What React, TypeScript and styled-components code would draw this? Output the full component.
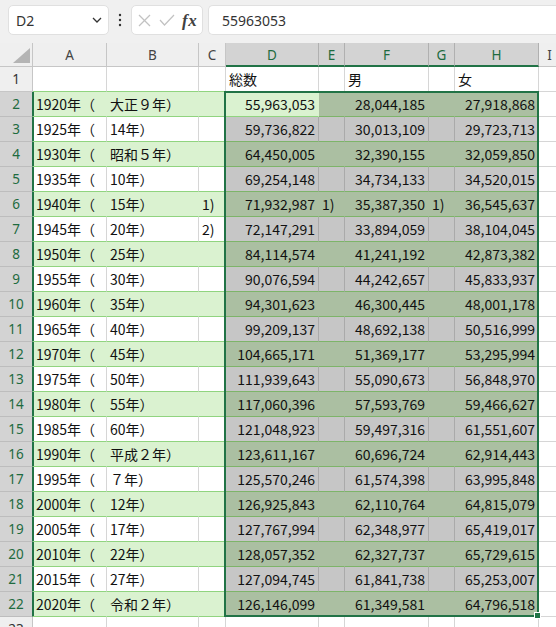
import React from "react";
import styled, { createGlobalStyle } from "styled-components";

const GlobalStyle = createGlobalStyle`
  html, body {
    margin: 0;
    padding: 0;
    width: 556px;
    height: 627px;
    overflow: hidden;
    background: #ffffff;
  }
  #root { width: 556px; height: 627px; overflow: hidden; }
`;

const C = {
  dark: "#217346",
  headGreenText: "#1e6b3f",
  greenFill: "#daf2d0",
  greenLine: "#90d47f",
  selGreenFill: "#abbfa2",
  selGrayFill: "#c6c6c6",
  selGreenLine: "#7db469",
  selGrayLine: "#aaaaaa",
  grid: "#d6d6d6",
  headBg: "#efefef",
  headSelBg: "#d3d3d3",
  headLine: "#c6c6c6",
  headSelLine: "#b0b0b0",
};

const Page = styled.div`
  width: 556px;
  height: 627px;
  overflow: hidden;
  background: #ffffff;
  display: flex;
  flex-direction: column;
`;

const FormulaBar = styled.div`
  height: 43px;
  box-sizing: border-box;
  padding: 5px 0 8px 8px;
  background: #f0f0f0;
  display: flex;
  align-items: stretch;
  flex-shrink: 0;
`;

const NameBox = styled.div`
  width: 101px;
  box-sizing: border-box;
  background: #ffffff;
  border: 1px solid #e0e0e0;
  border-radius: 5px;
  display: flex;
  align-items: center;
  justify-content: space-between;
  padding: 0 6px 0 7px;
  font-family: "Noto Sans", "Open Sans", sans-serif;
  font-size: 14px;
  color: #333333;
`;

const Kebab = styled.div`
  width: 22px;
  display: flex;
  align-items: center;
  justify-content: center;
`;

const ActionBox = styled.div`
  width: 72px;
  box-sizing: border-box;
  background: #ffffff;
  border: 1px solid #e0e0e0;
  border-radius: 5px;
  display: grid;
  grid-template-columns: 1fr 1fr 1fr;
  align-items: center;
  justify-items: center;
  padding: 0 1px;
`;

const Fx = styled.span`
  font-family: "Liberation Serif", "DejaVu Serif", serif;
  font-style: italic;
  font-weight: bold;
  font-size: 17px;
  color: #404040;
  letter-spacing: 0.5px;
  line-height: 1;
`;

const FormulaInput = styled.div`
  flex: 1;
  margin-left: 5px;
  box-sizing: border-box;
  background: #ffffff;
  border: 1px solid #e0e0e0;
  border-right: none;
  border-radius: 5px 0 0 5px;
  display: flex;
  align-items: center;
  padding-left: 13px;
  font-family: "Noto Sans", "Open Sans", sans-serif;
  font-size: 14px;
  color: #333333;
`;

const Sheet = styled.div`
  display: grid;
  grid-template-columns: 33px 74px 92px 27px 93px 26px 84px 26px 84px 22px;
  grid-template-rows: 24px repeat(23, 25px);
  width: 561px;
`;

const Corner = styled.div`
  grid-row: 1;
  grid-column: 1;
  background: ${C.headBg};
  border-right: 1px solid ${C.headLine};
  border-bottom: 1px solid ${C.headLine};
  box-sizing: border-box;
  display: flex;
  align-items: flex-end;
  justify-content: flex-end;
  padding: 0 2px 3px 0;
`;

const ColHead = styled.div<{ $sel: boolean; $col: number }>`
  grid-row: 1;
  grid-column: ${(p) => p.$col};
  box-sizing: border-box;
  background: ${(p) => (p.$sel ? C.headSelBg : C.headBg)};
  color: ${(p) => (p.$sel ? C.headGreenText : "#444444")};
  border-right: 1px solid ${(p) => (p.$sel ? C.headSelLine : C.headLine)};
  border-bottom: ${(p) => (p.$sel ? `2px solid ${C.dark}` : `1px solid ${C.headLine}`)};
  display: flex;
  align-items: center;
  justify-content: center;
  font-family: "Noto Sans", "Open Sans", sans-serif;
  font-size: 13.5px;
  padding-top: ${(p) => (p.$sel ? "1px" : "0")};
`;

const RowHead = styled.div<{ $sel: boolean; $row: number }>`
  grid-row: ${(p) => p.$row};
  grid-column: 1;
  box-sizing: border-box;
  background: ${(p) => (p.$sel ? C.headSelBg : C.headBg)};
  color: ${(p) => (p.$sel ? C.headGreenText : "#333333")};
  border-right: 1px solid ${(p) => (p.$sel ? C.dark : C.headLine)};
  border-bottom: 1px solid ${(p) => (p.$sel ? "#bdbdbd" : C.headLine)};
  display: flex;
  align-items: center;
  justify-content: center;
  font-family: "Noto Sans", "Open Sans", sans-serif;
  font-size: 13.5px;
`;

const Cell = styled.div<{
  $row: number;
  $col: number;
  $fill: string;
  $right: string;
  $bottom: string;
  $align: "left" | "right";
  $edge: boolean;
}>`
  grid-row: ${(p) => p.$row};
  grid-column: ${(p) => p.$col};
  box-sizing: border-box;
  background: ${(p) => p.$fill};
  border-right: 1px solid ${(p) => p.$right};
  border-bottom: 1px solid ${(p) => p.$bottom};
  box-shadow: ${(p) => (p.$edge ? `inset 1px 0 0 ${C.dark}` : "none")};
  display: flex;
  align-items: center;
  justify-content: ${(p) => (p.$align === "right" ? "flex-end" : "flex-start")};
  padding: 0 3px 1px 3px;
  font-family: "Noto Sans CJK JP", "Noto Sans", sans-serif;
  font-size: 14px;
  color: #111111;
  white-space: nowrap;
  overflow: visible;
`;

const Selection = styled.div`
  grid-column: 5 / 10;
  grid-row: 3 / 24;
  margin: -1px 0 0 -2px;
  border: 2px solid ${C.dark};
  position: relative;
  z-index: 1;
  pointer-events: none;
`;

const FillHandle = styled.div`
  position: absolute;
  right: -4px;
  bottom: -4px;
  width: 5px;
  height: 5px;
  background: ${C.dark};
  border: 1px solid #ffffff;
`;

type Row = [string, string, string, string, string, string, string, string];

const data: Row[] = [
  ["", "", "", "総数", "", "男", "", "女"],
  ["1920年（", "大正９年）", "", "55,963,053", "", "28,044,185", "", "27,918,868"],
  ["1925年（", "14年）", "", "59,736,822", "", "30,013,109", "", "29,723,713"],
  ["1930年（", "昭和５年）", "", "64,450,005", "", "32,390,155", "", "32,059,850"],
  ["1935年（", "10年）", "", "69,254,148", "", "34,734,133", "", "34,520,015"],
  ["1940年（", "15年）", "1)", "71,932,987", "1)", "35,387,350", "1)", "36,545,637"],
  ["1945年（", "20年）", "2)", "72,147,291", "", "33,894,059", "", "38,104,045"],
  ["1950年（", "25年）", "", "84,114,574", "", "41,241,192", "", "42,873,382"],
  ["1955年（", "30年）", "", "90,076,594", "", "44,242,657", "", "45,833,937"],
  ["1960年（", "35年）", "", "94,301,623", "", "46,300,445", "", "48,001,178"],
  ["1965年（", "40年）", "", "99,209,137", "", "48,692,138", "", "50,516,999"],
  ["1970年（", "45年）", "", "104,665,171", "", "51,369,177", "", "53,295,994"],
  ["1975年（", "50年）", "", "111,939,643", "", "55,090,673", "", "56,848,970"],
  ["1980年（", "55年）", "", "117,060,396", "", "57,593,769", "", "59,466,627"],
  ["1985年（", "60年）", "", "121,048,923", "", "59,497,316", "", "61,551,607"],
  ["1990年（", "平成２年）", "", "123,611,167", "", "60,696,724", "", "62,914,443"],
  ["1995年（", "７年）", "", "125,570,246", "", "61,574,398", "", "63,995,848"],
  ["2000年（", "12年）", "", "126,925,843", "", "62,110,764", "", "64,815,079"],
  ["2005年（", "17年）", "", "127,767,994", "", "62,348,977", "", "65,419,017"],
  ["2010年（", "22年）", "", "128,057,352", "", "62,327,737", "", "65,729,615"],
  ["2015年（", "27年）", "", "127,094,745", "", "61,841,738", "", "65,253,007"],
  ["2020年（", "令和２年）", "", "126,146,099", "", "61,349,581", "", "64,796,518"],
  ["", "", "", "", "", "", "", ""],
];

const COLS = ["A", "B", "C", "D", "E", "F", "G", "H", "I"];

function cellStyle(r: number, c: number) {
  // r: row number (1..23), c: column index 0..8 (A..I)
  const inData = r >= 2 && r <= 22 && c <= 7;
  const green = inData && r % 2 === 0;
  const sel = r >= 2 && r <= 22 && c >= 3 && c <= 7;
  const active = r === 2 && c === 3;
  let fill = "#ffffff";
  let right = C.grid;
  let bottom = C.grid;
  if (inData) {
    if (sel && !active) {
      fill = green ? C.selGreenFill : C.selGrayFill;
      right = green ? fill : C.selGrayLine;
      bottom = C.selGreenLine;
    } else {
      fill = green ? C.greenFill : "#ffffff";
      right = green ? fill : C.grid;
      bottom = C.greenLine;
    }
  }
  if (r === 1 && c <= 7) bottom = C.greenLine;
  const align: "left" | "right" = c === 3 || c === 5 || c === 7 ? "right" : "left";
  const finalAlign = r === 1 ? "left" : align;
  return { fill, right, bottom, align: finalAlign, edge: c === 0 && r >= 2 && r <= 22 };
}

const CornerTriangle = () => (
  <svg width="17" height="15" viewBox="0 0 17 15">
    <polygon points="0,15 17,15 17,0" fill="#b4b4b4" />
  </svg>
);

const Chevron = () => (
  <svg width="10" height="6" viewBox="0 0 10 6">
    <polyline points="1,1 5,5 9,1" fill="none" stroke="#333" strokeWidth="1.3" />
  </svg>
);

const Dots = () => (
  <svg width="4" height="14" viewBox="0 0 4 14">
    <circle cx="2" cy="2" r="1.2" fill="#333" />
    <circle cx="2" cy="7" r="1.2" fill="#333" />
    <circle cx="2" cy="12" r="1.2" fill="#333" />
  </svg>
);

const Cross = () => (
  <svg width="13" height="13" viewBox="0 0 13 13">
    <line x1="1" y1="1" x2="12" y2="12" stroke="#c2c2c2" strokeWidth="1.2" />
    <line x1="12" y1="1" x2="1" y2="12" stroke="#c2c2c2" strokeWidth="1.2" />
  </svg>
);

const Check = () => (
  <svg width="16" height="12" viewBox="0 0 16 12">
    <polyline points="1,6 5.5,11 15,1" fill="none" stroke="#c2c2c2" strokeWidth="1.2" />
  </svg>
);

export default function App() {
  return (
    <>
      <GlobalStyle />
      <Page>
        <FormulaBar>
          <NameBox>
            <span>D2</span>
            <Chevron />
          </NameBox>
          <Kebab>
            <Dots />
          </Kebab>
          <ActionBox>
            <Cross />
            <Check />
            <Fx>fx</Fx>
          </ActionBox>
          <FormulaInput>55963053</FormulaInput>
        </FormulaBar>
        <Sheet>
          <Corner>
            <CornerTriangle />
          </Corner>
          {COLS.map((col, i) => (
            <ColHead key={col} $sel={i >= 3 && i <= 7} $col={i + 2}>
              {col}
            </ColHead>
          ))}
          {data.map((row, ri) => {
            const r = ri + 1;
            const cells = [...row, ""];
            return (
              <React.Fragment key={r}>
                <RowHead $sel={r >= 2 && r <= 22} $row={r + 1}>
                  {r}
                </RowHead>
                {cells.map((v, c) => {
                  const s = cellStyle(r, c);
                  return (
                    <Cell
                      key={c}
                      $row={r + 1}
                      $col={c + 2}
                      $fill={s.fill}
                      $right={s.right}
                      $bottom={s.bottom}
                      $align={s.align}
                      $edge={s.edge}
                    >
                      {v}
                    </Cell>
                  );
                })}
              </React.Fragment>
            );
          })}
          <Selection>
            <FillHandle />
          </Selection>
        </Sheet>
      </Page>
    </>
  );
}
